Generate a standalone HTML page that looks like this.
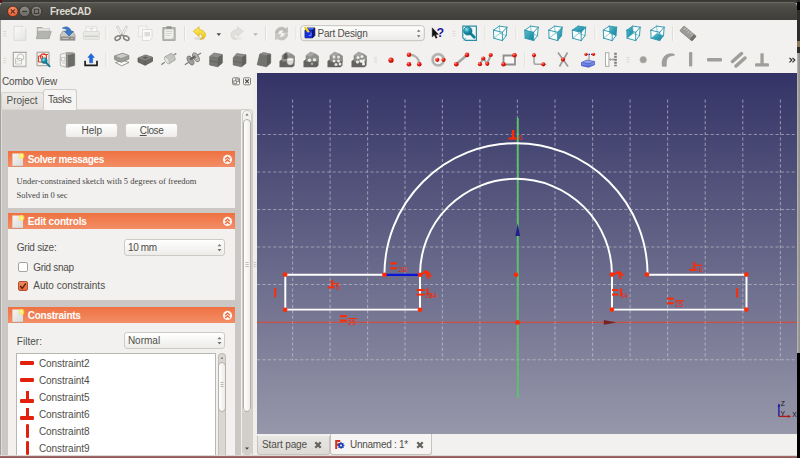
<!DOCTYPE html>
<html><head><meta charset="utf-8"><title>FreeCAD</title>
<style>
html,body{margin:0;padding:0;}
body{width:800px;height:458px;overflow:hidden;position:relative;background:#f2f1f0;font-family:"Liberation Sans",sans-serif;}
div,span,svg{position:absolute;box-sizing:border-box;}
.t{white-space:nowrap;display:block;}
.btn{border:1px solid #cecbc5;border-radius:3px;background:linear-gradient(#ffffff,#edecea);}
.hdr{left:8px;width:227px;height:16.3px;background:linear-gradient(#ef7241,#f28d66);}
.body{left:8px;width:227px;background:#f2f1f0;}
.sep{width:1px;background:#d6d3cf;}
.cb{width:10px;height:10px;border:1px solid #a9a49d;border-radius:2px;background:#fff;}
</style></head><body>

<div style="left:0;top:0;width:800px;height:3px;background:#3a3935"></div>
<div style="left:0;top:0;width:2px;height:3px;background:#5a1212"></div>
<div style="left:0;top:2px;width:797px;height:18px;background:linear-gradient(#56554f,#4a4944 35%,#3f3e3a);border-radius:4px 4px 0 0;border-top:1px solid #6b6a64"></div>
<svg style="left:0;top:0" width="60" height="22" viewBox="0 0 60 22">
<defs><radialGradient id="gc" cx="50%" cy="35%" r="65%"><stop offset="0" stop-color="#f79a75"/><stop offset="1" stop-color="#e3542a"/></radialGradient>
<linearGradient id="gg" x1="0" y1="0" x2="0" y2="1"><stop offset="0" stop-color="#8d8b84"/><stop offset="1" stop-color="#6b6962"/></linearGradient></defs>
<circle cx="12.8" cy="11.4" r="5.3" fill="url(#gc)" stroke="#3a2a22" stroke-width=".8"/>
<path d="M10.8 9.4l4 4M14.8 9.4l-4 4" stroke="#5c2a18" stroke-width="1.2" fill="none"/>
<circle cx="24.6" cy="11.4" r="5.3" fill="url(#gg)" stroke="#2d2c29" stroke-width=".8"/>
<path d="M22.2 11.5h4.8" stroke="#3c3b37" stroke-width="1.2"/>
<circle cx="36.5" cy="11.4" r="5.3" fill="url(#gg)" stroke="#2d2c29" stroke-width=".8"/>
<rect x="34.4" y="9.3" width="4.2" height="4.2" fill="none" stroke="#3c3b37" stroke-width="1"/>
</svg>
<span class="t" id="title" style="left:50px;top:2.10px;height:20px;line-height:20px;font-size:10px;color:#dfdbd2;font-family:'Liberation Sans', sans-serif;letter-spacing:-0.257px;font-weight:bold;">FreeCAD</span>
<div style="left:797px;top:0;width:3px;height:53px;background:#2f2d2a"></div>
<div style="left:797px;top:2px;width:3px;height:8px;background:#000"></div>
<div style="left:797px;top:41px;width:3px;height:6px;background:#8a7a5c"></div>
<div style="left:797px;top:53px;width:3px;height:300px;background:linear-gradient(90deg,#c2c0bc,#a09e9a 40%,#8f8d89)"></div>
<div style="left:797px;top:353px;width:3px;height:105px;background:#000"></div>
<div style="left:0;top:20px;width:1px;height:435px;background:#a3a19d"></div>
<div style="left:1px;top:20px;width:796px;height:53px;background:#f2f1f0"></div>
<svg style="left:0;top:20px" width="797" height="53" viewBox="0 20 797 53">
<defs>
<linearGradient id="gPage" x1="0" y1="0" x2="1" y2="1"><stop offset="0" stop-color="#fbfbfa"/><stop offset="1" stop-color="#e4e4e2"/></linearGradient>
<linearGradient id="gYel" x1="0" y1="0" x2="0" y2="1"><stop offset="0" stop-color="#fdf06a"/><stop offset="1" stop-color="#e8c414"/></linearGradient>
<linearGradient id="gTeal" x1="0" y1="0" x2="1" y2="1"><stop offset="0" stop-color="#5ec0d2"/><stop offset="1" stop-color="#0b7f98"/></linearGradient>
<radialGradient id="gRed" cx="35%" cy="30%" r="70%"><stop offset="0" stop-color="#ff9a8a"/><stop offset=".45" stop-color="#f02010"/><stop offset="1" stop-color="#b00c04"/></radialGradient>
<radialGradient id="gBall" cx="35%" cy="30%" r="70%"><stop offset="0" stop-color="#9be0ee"/><stop offset=".5" stop-color="#1c9cb6"/><stop offset="1" stop-color="#0a6a80"/></radialGradient>
<linearGradient id="gBtn" x1="0" y1="0" x2="0" y2="1"><stop offset="0" stop-color="#fefefe"/><stop offset="1" stop-color="#eceae8"/></linearGradient>
<linearGradient id="gBlue" x1="0" y1="0" x2="0" y2="1"><stop offset="0" stop-color="#a9b8f2"/><stop offset="1" stop-color="#4a62d8"/></linearGradient>
</defs>
<path d="M3.2 31.500000000000004h3M3.2 33.7h3M3.2 35.900000000000006h3" stroke="#dcd9d5" stroke-width="1"/>
<path d="M3.2 58.3h3M3.2 60.5h3M3.2 62.7h3" stroke="#dcd9d5" stroke-width="1"/>
<path d="M14 26.3h9l2.800 2.800v11.200h-11.800z" fill="url(#gPage)" stroke="#dbdbd8" stroke-width="1"/><path d="M22.600 27h2.400v2.600h-2.400z" fill="#fff" stroke="#e2e2df" stroke-width=".5"/>
<path d="M36.800 27h5.200l1 1.300h7v10h-13.200z" fill="#a9a9a5"/><path d="M38 28.300h11.400v8h-11.400z" fill="#ebebe8" stroke="#c8c8c4" stroke-width=".5"/><path d="M38.600 29.600h10.800v7h-10.800z" fill="#dcdcd9"/><path d="M36.300 38.700l2-7.300h13l-2.300 7.300z" fill="#b3b3af" stroke="#a0a09c" stroke-width=".7"/>
<path d="M60.300 35l2.500-4h9.700l2.500 4v5.300h-14.700z" fill="#c9c9c5" stroke="#9a9a96" stroke-width=".8"/><path d="M60.700 36.600h13.900v3.500h-13.900z" fill="#8d8d89"/><path d="M62.500 38.400h6" stroke="#d4d4d0" stroke-width=".8"/><circle cx="72" cy="38.400" r=".7" fill="#d4d4d0"/>
<path d="M62.300 28.200c3.800-2.800 8.300-.8 8.800 3.300h2.300l-4.400 4.500-4.400-4.500h2.500c-.2-2.200-2.300-3.300-4.800-3.300z" fill="#3a78c8" stroke="#2a5da6" stroke-width=".6"/>
<path d="M86 26.800h10.800v5.500h-10.800z" fill="#f7f7f6" stroke="#d8d8d5" stroke-width=".8"/><path d="M84.300 31.500h14q1 0 1 1v5.800q0 1-1 1h-14q-1 0-1-1v-5.800q0-1 1-1z" fill="#e9e9e6" stroke="#d4d4d0" stroke-width=".8"/><path d="M84.500 36.300h13.600" stroke="#cbcbc7" stroke-width="1.400"/><path d="M89.500 28.600h4M91.500 28.600v2" stroke="#d2d2ce" stroke-width=".8"/>
<path d="M106 26.0v15" stroke="#e0ddd9" stroke-width="1"/><path d="M107 26.0v15" stroke="#f9f9f8" stroke-width="1"/>
<path d="M116.500 26.700l1.700-.7 4.700 9.200-1.500 1.100z" fill="#f6f6f5" stroke="#bfbfbb" stroke-width=".7"/><path d="M127.500 26.700l-1.700-.7-4.700 9.200 1.500 1.100z" fill="#f6f6f5" stroke="#bfbfbb" stroke-width=".7"/><ellipse cx="117.700" cy="38.100" rx="2.900" ry="1.900" transform="rotate(-32 117.700 38.100)" fill="none" stroke="#80807c" stroke-width="1.500"/><ellipse cx="126.300" cy="38.100" rx="2.900" ry="1.900" transform="rotate(32 126.300 38.100)" fill="none" stroke="#80807c" stroke-width="1.500"/><path d="M120 36.300l2-1.500 2 1.500" fill="none" stroke="#80807c" stroke-width="1.300"/>
<path d="M138.500 26h8.500v10.500h-8.500z" fill="#f5f5f4" stroke="#dededb" stroke-width=".8"/><path d="M142.500 29.500h9.500v8.500l-2.500 2.500h-7z" fill="#fafaf9" stroke="#d6d6d3" stroke-width=".8"/><path d="M144.500 32h5.500v4.500h-5.500z" fill="#dcdcd9"/>
<path d="M162.800 27.500h12.400v13h-12.400z" fill="#b4b4b0" stroke="#a2a29e" stroke-width=".8"/><path d="M164.400 29.400h9.200v9.400h-9.200z" fill="#f0f0ee"/><path d="M166.500 26.300h5v2.300h-5z" fill="#8e8e8a"/><path d="M165.800 31.500h6.400M165.800 33.500h6.400M165.800 35.500h4.500" stroke="#d0d0cc" stroke-width=".9"/><path d="M171.300 38.800l2.300-2.300v2.300z" fill="#c8c8c4"/>
<path d="M184.5 26.0v15" stroke="#e0ddd9" stroke-width="1"/><path d="M185.5 26.0v15" stroke="#f9f9f8" stroke-width="1"/>
<ellipse cx="199.500" cy="38.600" rx="5.500" ry="1.300" fill="#d8d6d2" opacity=".8"/>
<path d="M193.300 31.300l5.800-4.600v2.900c4.300.3 6.600 3 6.300 5.800-.3 2.300-2.200 3.800-5.200 3.900 1.700-1 2.300-2.300 2-3.500-.3-1.300-1.500-2-3.100-2v2.800z" fill="url(#gYel)" stroke="#d9b010" stroke-width=".7" stroke-linejoin="round"/>
<path d="M216.600 33.200h4.400l-2.200 2.900z" fill="#4a4844"/>
<ellipse cx="237" cy="38.600" rx="5.500" ry="1.300" fill="#e4e2de" opacity=".8"/>
<path d="M243.200 31.300l-5.800-4.600v2.900c-4.300.3-6.600 3-6.300 5.800.3 2.300 2.200 3.800 5.200 3.900-1.700-1-2.300-2.300-2-3.500.3-1.300 1.500-2 3.100-2v2.800z" fill="#e0e0dd" stroke="#d0d0cc" stroke-width=".7" stroke-linejoin="round"/>
<path d="M253.300 33.200h4.400l-2.200 2.900z" fill="#b9b7b2"/>
<path d="M265.5 26.0v15" stroke="#e0ddd9" stroke-width="1"/><path d="M266.5 26.0v15" stroke="#f9f9f8" stroke-width="1"/>
<path d="M275.300 33.500c0-4 3-6.300 6.300-6.300 1.800 0 3.200.6 4.300 1.700l1.600-1.500v5.200h-5.300l1.800-1.800c-.7-.6-1.500-.9-2.400-.9-1.900 0-3.500 1.400-3.600 3.600z" fill="#bbbbb7" stroke="#adada9" stroke-width=".5"/>
<path d="M287.700 33.700c0 4-3 6.300-6.300 6.300-1.800 0-3.200-.6-4.300-1.700l-1.600 1.500v-5.200h5.300l-1.800 1.800c.7.600 1.500.9 2.400.9 1.900 0 3.500-1.400 3.600-3.600z" fill="#c6c6c2" stroke="#b3b3af" stroke-width=".5"/>
<path d="M296 26.0v15" stroke="#e0ddd9" stroke-width="1"/><path d="M297 26.0v15" stroke="#f9f9f8" stroke-width="1"/>
<rect x="300.800" y="25.700" width="123.500" height="15" rx="3" fill="url(#gBtn)" stroke="#c6c2bc" stroke-width="1"/>
<path d="M305 30l2.200-2h7.600v7.600l-2.200 2.200h-7.600z" fill="#0a1490" stroke="#05083a" stroke-width=".8"/><path d="M305 30h7.600v7.800h-7.600z" fill="#1230e0"/><path d="M305 30l2.200-2h7.600l-2.200 2z" fill="#4468ff"/><path d="M305 30h7.600v7.800M312.600 30l2.200-2" fill="none" stroke="#05083a" stroke-width=".6"/><path d="M305.300 27.800l3 3.600" stroke="#f4d21c" stroke-width="2.300" stroke-linecap="round"/><path d="M308.800 35.500h2.300v-3" stroke="#8ea0ff" stroke-width=".8" fill="none"/>
<path d="M416.900 31.700l1.800-2.200 1.800 2.200zM416.900 35.300l1.800 2.200 1.800-2.200z" fill="#76746f"/>
<path d="M432.200 27.800v9.200l2.100-2 1.500 3.300 1.400-.6-1.500-3.200h2.800z" fill="#111" stroke="#111" stroke-width=".4"/>
<text x="436.600" y="37.400" font-family="Liberation Sans, sans-serif" font-weight="bold" font-size="12.500" fill="#1a1a9c">?</text>
<path d="M452.5 31.3h3M452.5 33.5h3M452.5 35.7h3" stroke="#dcd9d5" stroke-width="1"/>
<path d="M462.800 26.200h13.600v14.200h-11l-2.600-2.600z" fill="#f2f8fa" stroke="#2a8ea4" stroke-width="1.200"/><path d="M463.800 40.400l2-2.600" stroke="#2a8ea4" stroke-width=".8"/>
<path d="M470.800 33.800l3.500 3.500" stroke="#0d7f96" stroke-width="2.700" stroke-linecap="round"/><circle cx="467.800" cy="30.900" r="4.200" fill="url(#gBall)" stroke="#0a6a80" stroke-width=".6"/>
<path d="M485 26.0v15" stroke="#e0ddd9" stroke-width="1"/><path d="M486 26.0v15" stroke="#f9f9f8" stroke-width="1"/>
<path d="M493.5 30.2L499.3 26.1L506.9 27.2L506.2 35.7L502.4 40.6L493.8 38.2z" fill="#fbfdfd"/><path d="M506.2 35.7L500.0 33.3" stroke="#5cb2c2" stroke-width=".7"/><path d="M500.0 33.3L499.3 26.1" stroke="#5cb2c2" stroke-width=".7"/><path d="M493.8 38.2L500.0 33.3" stroke="#5cb2c2" stroke-width=".7"/><path d="M493.5 30.2L502.4 32.3M502.4 32.3L502.4 40.6M502.4 40.6L493.8 38.2M493.8 38.2L493.5 30.2M499.3 26.1L506.9 27.2M506.9 27.2L506.2 35.7M493.5 30.2L499.3 26.1M502.4 32.3L506.9 27.2M502.4 40.6L506.2 35.7" stroke="#2f98ac" stroke-width=".95" stroke-linecap="round" fill="none"/>
<path d="M516 26.0v15" stroke="#e0ddd9" stroke-width="1"/><path d="M517 26.0v15" stroke="#f9f9f8" stroke-width="1"/>
<path d="M524.8 30.2L530.6 26.1L538.2 27.2L537.5 35.7L533.7 40.6L525.1 38.2z" fill="#fbfdfd"/><path d="M537.5 35.7L531.3 33.3" stroke="#5cb2c2" stroke-width=".7"/><path d="M531.3 33.3L530.6 26.1" stroke="#5cb2c2" stroke-width=".7"/><path d="M525.1 38.2L531.3 33.3" stroke="#5cb2c2" stroke-width=".7"/><path d="M524.8 30.2L533.7 32.3L533.7 40.6L525.1 38.2z" fill="url(#gTeal)"/><path d="M524.8 30.2L533.7 32.3M533.7 32.3L533.7 40.6M533.7 40.6L525.1 38.2M525.1 38.2L524.8 30.2M530.6 26.1L538.2 27.2M538.2 27.2L537.5 35.7M524.8 30.2L530.6 26.1M533.7 32.3L538.2 27.2M533.7 40.6L537.5 35.7" stroke="#2f98ac" stroke-width=".95" stroke-linecap="round" fill="none"/>
<path d="M548.8 30.2L554.6 26.1L562.2 27.2L561.5 35.7L557.7 40.6L549.1 38.2z" fill="#fbfdfd"/><path d="M561.5 35.7L555.3 33.3" stroke="#5cb2c2" stroke-width=".7"/><path d="M555.3 33.3L554.6 26.1" stroke="#5cb2c2" stroke-width=".7"/><path d="M549.1 38.2L555.3 33.3" stroke="#5cb2c2" stroke-width=".7"/><path d="M557.7 32.3L562.2 27.2L561.5 35.7L557.7 40.6z" fill="url(#gTeal)"/><path d="M548.8 30.2L557.7 32.3M557.7 32.3L557.7 40.6M557.7 40.6L549.1 38.2M549.1 38.2L548.8 30.2M554.6 26.1L562.2 27.2M562.2 27.2L561.5 35.7M548.8 30.2L554.6 26.1M557.7 32.3L562.2 27.2M557.7 40.6L561.5 35.7" stroke="#2f98ac" stroke-width=".95" stroke-linecap="round" fill="none"/>
<path d="M572.3 30.2L578.1 26.1L585.7 27.2L585.0 35.7L581.2 40.6L572.6 38.2z" fill="#fbfdfd"/><path d="M585.0 35.7L578.8 33.3" stroke="#5cb2c2" stroke-width=".7"/><path d="M578.8 33.3L578.1 26.1" stroke="#5cb2c2" stroke-width=".7"/><path d="M572.6 38.2L578.8 33.3" stroke="#5cb2c2" stroke-width=".7"/><path d="M572.3 30.2L578.1 26.1L585.7 27.2L581.2 32.3z" fill="url(#gTeal)"/><path d="M572.3 30.2L581.2 32.3M581.2 32.3L581.2 40.6M581.2 40.6L572.6 38.2M572.6 38.2L572.3 30.2M578.1 26.1L585.7 27.2M585.7 27.2L585.0 35.7M572.3 30.2L578.1 26.1M581.2 32.3L585.7 27.2M581.2 40.6L585.0 35.7" stroke="#2f98ac" stroke-width=".95" stroke-linecap="round" fill="none"/>
<path d="M595 26.0v15" stroke="#e0ddd9" stroke-width="1"/><path d="M596 26.0v15" stroke="#f9f9f8" stroke-width="1"/>
<path d="M603.3 30.2L609.1 26.1L616.7 27.2L616.0 35.7L612.2 40.6L603.6 38.2z" fill="#fbfdfd"/><path d="M609.1 26.1L616.7 27.2L616.0 35.7L609.8 33.3z" fill="url(#gTeal)"/><path d="M616.0 35.7L609.8 33.3" stroke="#5cb2c2" stroke-width=".7"/><path d="M609.8 33.3L609.1 26.1" stroke="#5cb2c2" stroke-width=".7"/><path d="M603.6 38.2L609.8 33.3" stroke="#5cb2c2" stroke-width=".7"/><path d="M603.3 30.2L612.2 32.3M612.2 32.3L612.2 40.6M612.2 40.6L603.6 38.2M603.6 38.2L603.3 30.2M609.1 26.1L616.7 27.2M616.7 27.2L616.0 35.7M603.3 30.2L609.1 26.1M612.2 32.3L616.7 27.2M612.2 40.6L616.0 35.7" stroke="#2f98ac" stroke-width=".95" stroke-linecap="round" fill="none"/>
<path d="M626.8 30.2L632.6 26.1L640.2 27.2L639.5 35.7L635.7 40.6L627.1 38.2z" fill="#fbfdfd"/><path d="M626.8 30.2L632.6 26.1L633.3 33.3L627.1 38.2z" fill="url(#gTeal)"/><path d="M639.5 35.7L633.3 33.3" stroke="#5cb2c2" stroke-width=".7"/><path d="M633.3 33.3L632.6 26.1" stroke="#5cb2c2" stroke-width=".7"/><path d="M627.1 38.2L633.3 33.3" stroke="#5cb2c2" stroke-width=".7"/><path d="M626.8 30.2L635.7 32.3M635.7 32.3L635.7 40.6M635.7 40.6L627.1 38.2M627.1 38.2L626.8 30.2M632.6 26.1L640.2 27.2M640.2 27.2L639.5 35.7M626.8 30.2L632.6 26.1M635.7 32.3L640.2 27.2M635.7 40.6L639.5 35.7" stroke="#2f98ac" stroke-width=".95" stroke-linecap="round" fill="none"/>
<path d="M650.8 30.2L656.6 26.1L664.2 27.2L663.5 35.7L659.7 40.6L651.1 38.2z" fill="#fbfdfd"/><path d="M651.1 38.2L659.7 40.6L663.5 35.7L657.3 33.3z" fill="url(#gTeal)"/><path d="M663.5 35.7L657.3 33.3" stroke="#5cb2c2" stroke-width=".7"/><path d="M657.3 33.3L656.6 26.1" stroke="#5cb2c2" stroke-width=".7"/><path d="M651.1 38.2L657.3 33.3" stroke="#5cb2c2" stroke-width=".7"/><path d="M650.8 30.2L659.7 32.3M659.7 32.3L659.7 40.6M659.7 40.6L651.1 38.2M651.1 38.2L650.8 30.2M656.6 26.1L664.2 27.2M664.2 27.2L663.5 35.7M650.8 30.2L656.6 26.1M659.7 32.3L664.2 27.2M659.7 40.6L663.5 35.7" stroke="#2f98ac" stroke-width=".95" stroke-linecap="round" fill="none"/>
<path d="M672.5 26.0v15" stroke="#e0ddd9" stroke-width="1"/><path d="M673.5 26.0v15" stroke="#f9f9f8" stroke-width="1"/>
<g transform="rotate(40 688 33.500)"><rect x="680" y="30.300" width="16" height="6.400" rx="1" fill="#9a9a96" stroke="#7e7e7a" stroke-width=".7"/><path d="M682.500 30.500v3M685 30.500v2M687.500 30.500v3M690 30.500v2M692.500 30.500v3" stroke="#d4d4d0" stroke-width=".8"/><rect x="693" y="30.300" width="3" height="6.400" fill="#6e6e6a"/></g>
<path d="M13.300 52.300h12.800v14h-12.800z" fill="#f7f7f6" stroke="#a9a9a5" stroke-width="1.200"/><path d="M14 67h12.500v-13.500" fill="none" stroke="#d2d2ce" stroke-width=".9"/><circle cx="20.500" cy="57.300" r="3.300" fill="none" stroke="#b0b0ac" stroke-width=".8"/><path d="M15.500 58.500h6v5.500h-6z" fill="none" stroke="#bcbcb8" stroke-width=".8"/><path d="M15 61.500h3" stroke="#c4c4c0" stroke-width=".7"/>
<path d="M37 52.200h12v13.500h-12z" fill="#f4efed" stroke="#9a9a96" stroke-width="1"/><circle cx="43.500" cy="56.800" r="3" fill="none" stroke="#e03a20" stroke-width="1.100"/><path d="M38.500 56h4v6h-4zM43 54.500h5" fill="none" stroke="#e03a20" stroke-width="1"/><path d="M46 62.500l3.600 3.800" stroke="#0d7f96" stroke-width="1.900" stroke-linecap="round"/><circle cx="44.300" cy="60.600" r="2.900" fill="url(#gBall)" stroke="#0a6a80" stroke-width=".5"/>
<path d="M60.300 54.500l6.500-2h6.500l1.500 1v12l-7.500 2-7-2z" fill="#f2f2f0" stroke="#a9a9a5" stroke-width=".8"/><path d="M66.800 52.500h6.500l1.500 1-7.500 1.500z" fill="#9a9a96"/><path d="M67.300 55v12.500l7.500-2v-12z" fill="#6b6b67"/><path d="M66.800 52.500l.5 2.500v12.500l-1.500-.5v-13z" fill="#8a8a86"/><path d="M61.500 57.500h3.500v3.500h-3.500zM62 63h3" stroke="#b9b9b5" stroke-width=".7" fill="none"/>
<path d="M85.100 60.800v4.600h11.900v-4.600" fill="none" stroke="#1c1c1a" stroke-width="1.700"/><path d="M91.100 53.600l3.200 3.800h-1.700v5.400h-3v-5.400h-1.700z" fill="#1f6ae0" stroke="#1450b8" stroke-width=".5"/>
<path d="M106 52.2v15" stroke="#e0ddd9" stroke-width="1"/><path d="M107 52.2v15" stroke="#f9f9f8" stroke-width="1"/>
<path d="M115.500 62.600l7.300-2.400 6.200 2.300-7.300 3.300z" fill="#fafaf9" stroke="#6e6e6a" stroke-width=".7"/><path d="M114.600 56l8-2.700 6.200 2.200v3.500l-7.600 3.300-6.600-2.800z" fill="#9c9c98" stroke="#767672" stroke-width=".7"/><path d="M114.600 56l8-2.700 6.200 2.200-7.600 3z" fill="#cbcbc8" stroke="#8a8a86" stroke-width=".6"/>
<path d="M138 58l7.500-3 7 2.300v4l-7.300 4-7.200-3.300z" fill="#696966" stroke="#4e4e4b" stroke-width=".7"/><path d="M138 58l7.500-3 7 2.300-7.300 3.300z" fill="#878783"/><path d="M142.300 57.800l3-1.200 2.800 1-3 1.300z" fill="#5c5c59"/><path d="M145.200 60.600v4.500" stroke="#55554f" stroke-width=".6"/>
<path d="M161.300 64.600l3.500-2.300M173.500 55.300l2.800-1.900" stroke="#8a8a86" stroke-width="1.300"/><path d="M164.500 57l6.500-3.700c2.500.8 4.300 3.600 4.300 6.600l-6.300 4c-2.800-.6-4.600-3.500-4.500-6.900z" fill="#c3c3bf" stroke="#9c9c98" stroke-width=".7"/><path d="M164.500 57c-.1 3.400 1.700 6.300 4.500 6.900 .5-2.800-.5-6-4.500-6.900z" fill="#e6e6e3" stroke="#a9a9a5" stroke-width=".5"/>
<path d="M184.800 64.800l4-2.600M197 55.500l4-2.500" stroke="#7c7c78" stroke-width="1.200"/><ellipse cx="190.500" cy="60.500" rx="2.600" ry="5" transform="rotate(-30 190.500 60.500)" fill="#9d9d99" stroke="#6e6e6a" stroke-width=".7"/><ellipse cx="196" cy="57.300" rx="2.600" ry="5" transform="rotate(-30 196 57.300)" fill="#b5b5b1" stroke="#6e6e6a" stroke-width=".7"/><path d="M190 59.500l5.500-3.200" stroke="#6a6a66" stroke-width="2.600"/>
<path d="M209.7 56.300l4.300-3.300 8.300 1.500v8.500l-4.500 3.800-8.100-1.800z" fill="#8c8c88" stroke="#666662" stroke-width=".6"/><path d="M209.7 56.800q3.500-1 8.100.8v9.200l-8.100-1.800z" fill="#757571"/><path d="M217.8 57.600l4.500-3.100v8.500l-4.500 3.800z" fill="#62625f"/><path d="M209.7 60.800l8.100 1.500" stroke="#5a5a57" stroke-width=".7"/>
<path d="M233.2 57.800l3.500-4.300 9.300 1.300v8.500l-4.500 3.500-8.300-1.800z" fill="#8e8e8a" stroke="#666662" stroke-width=".6"/><path d="M233.2 57.800l2.500-2 6 1.300v9.700l-8.500-1.800z" fill="#757571"/><path d="M241.7 57.100l4.300-2.300v8.500l-4.300 3.500z" fill="#62625f"/><path d="M233.2 61.300l8.500 1.500" stroke="#5a5a57" stroke-width=".7"/>
<path d="M259.8 54l3.700-1.500 7.200 1.500v9l-4.200 3.800-9.300-2z" fill="#8e8e8a" stroke="#666662" stroke-width=".6"/><path d="M259.8 54l6.700 1.300v11.500l-9.300-2z" fill="#72726e"/><path d="M266.5 55.300l4.200-1.300v9l-4.200 3.800z" fill="#5f5f5c"/>
<path d="M279.5 61l3-2 12 .500v6l-2 1.800h-13z" fill="#62625f"/><path d="M282 55.500l4.500-3.300 4.500 1.500 3.500 2.300v5.500h-12.500z" fill="#8f8f8b" stroke="#777773" stroke-width=".5"/><path d="M282 55.500l4.500-3.300 4.500 1.500-4.500 3z" fill="#a6a6a2"/><path d="M283.5 54.500l2.300-1.500 1.700 1v5h-4z" fill="#5a5a57"/><ellipse cx="290.2" cy="61.5" rx="3.200" ry="3.600" fill="#dededb" stroke="#a4a4a0" stroke-width=".5"/><ellipse cx="290.2" cy="59.6" rx="3.200" ry="1.500" fill="#f7f7f5" stroke="#b9b9b5" stroke-width=".4"/>
<path d="M303.5 61l3-2 12 .500v6l-2 1.800h-13z" fill="#62625f"/><path d="M306 55.500l4.500-3.300 4.500 1.500 3.500 2.300v5.500h-12.500z" fill="#8f8f8b" stroke="#777773" stroke-width=".5"/><path d="M306 55.500l4.500-3.300 4.500 1.500-4.500 3z" fill="#a6a6a2"/><circle cx="309.5" cy="60.300" r="1.700" fill="#e8e8e5"/><circle cx="314.5" cy="59.800" r="1.700" fill="#e8e8e5"/><circle cx="312" cy="63.800" r="1.300" fill="#a9a9a5"/>
<path d="M327.5 61l3-2 12 .500v6l-2 1.800h-13z" fill="#62625f"/><path d="M330 55.500l4.500-3.300 4.500 1.500 3.500 2.300v5.500h-12.500z" fill="#8f8f8b" stroke="#777773" stroke-width=".5"/><path d="M330 55.500l4.500-3.300 4.500 1.500-4.500 3z" fill="#a6a6a2"/><circle cx="334" cy="57" r="1.500" fill="#e6e6e3"/><circle cx="338.5" cy="57" r="1.500" fill="#e6e6e3"/><circle cx="334" cy="61" r="1.500" fill="#e6e6e3"/><circle cx="338.5" cy="61" r="1.500" fill="#e6e6e3"/><circle cx="336" cy="64.5" r="1.500" fill="#e6e6e3"/><circle cx="340" cy="64" r="1.500" fill="#e6e6e3"/>
<path d="M351.5 61l3-2 12 .500v6l-2 1.800h-13z" fill="#62625f"/><path d="M354 55.500l4.500-3.300 4.500 1.500 3.500 2.300v5.500h-12.500z" fill="#8f8f8b" stroke="#777773" stroke-width=".5"/><path d="M354 55.500l4.500-3.300 4.500 1.500-4.500 3z" fill="#a6a6a2"/><circle cx="358" cy="57.5" r="1.600" fill="#ececea"/><circle cx="362" cy="56.5" r="1.600" fill="#ececea"/><circle cx="357.5" cy="62" r="1.600" fill="#ececea"/><circle cx="361" cy="61" r="1.600" fill="#ececea"/><circle cx="363.5" cy="64" r="1.600" fill="#ececea"/><path d="M360 62l4.500-3.500v5z" fill="#f4f4f2"/>
<path d="M374 57.5h3M374 59.7h3M374 61.900000000000006h3" stroke="#dcd9d5" stroke-width="1"/>
<circle cx="391" cy="60.2" r="2.6" fill="url(#gRed)"/>
<path d="M409.500 54.800c5.500 0 9.500 3.500 9.800 9.200" fill="none" stroke="#b0b0ac" stroke-width="2.400"/><circle cx="409" cy="54.8" r="2.3" fill="url(#gRed)"/><circle cx="409" cy="64.3" r="2.3" fill="url(#gRed)"/><circle cx="419.3" cy="64.3" r="2.3" fill="url(#gRed)"/>
<circle cx="438.200" cy="59.800" r="5.700" fill="none" stroke="#b0b0ac" stroke-width="2.700"/><circle cx="438.200" cy="59.800" r="6.900" fill="none" stroke="#d4d4d0" stroke-width=".6"/><circle cx="437.3" cy="59.8" r="2.1" fill="url(#gRed)"/><circle cx="443.5" cy="59.8" r="2.1" fill="url(#gRed)"/>
<path d="M456.500 64l10.500-9" stroke="#a4a4a0" stroke-width="2.600"/><circle cx="456.3" cy="64.3" r="2.3" fill="url(#gRed)"/><circle cx="467" cy="54.9" r="2.3" fill="url(#gRed)"/>
<path d="M480 64l3.300-5.500 4 5 3.500-8.500" fill="none" stroke="#a4a4a0" stroke-width="2"/><circle cx="480" cy="64.2" r="2.1" fill="url(#gRed)"/><circle cx="483.3" cy="58.5" r="2.1" fill="url(#gRed)"/><circle cx="487.3" cy="63.8" r="2.1" fill="url(#gRed)"/><circle cx="490.7" cy="55" r="2.1" fill="url(#gRed)"/>
<path d="M503.500 55.500h11.500v9h-11.500z" fill="#f7f7f6" stroke="#8e8e8a" stroke-width="1.800"/><circle cx="514.5" cy="55.3" r="2.3" fill="url(#gRed)"/><circle cx="503.5" cy="64.3" r="2.3" fill="url(#gRed)"/>
<path d="M524.8 52.2v15" stroke="#e0ddd9" stroke-width="1"/><path d="M525.8 52.2v15" stroke="#f9f9f8" stroke-width="1"/>
<path d="M534 54v7q0 3.300 3.300 3.300h7" fill="none" stroke="#b9b9b5" stroke-width="1.500"/><path d="M534 55v9.300h9.500" fill="none" stroke="#a0a09c" stroke-width=".9"/><path d="M534 52.500l1.200 2.500h-2.400zM546.500 64.300l-2.500 1.200v-2.400z" fill="#a0a09c"/><circle cx="534" cy="55.3" r="2" fill="url(#gRed)"/><circle cx="543.3" cy="64.3" r="2.1" fill="url(#gRed)"/>
<path d="M558 52.500l10 14M567.500 52.500l-8 14" stroke="#9c9c98" stroke-width="1.700"/><circle cx="563" cy="59.5" r="2.1" fill="url(#gRed)"/>
<path d="M581.500 62.500l5.500-2.500 7.500 1.500v3.300l-6 2.400-7-1.500z" fill="url(#gBlue)" stroke="#3b50c0" stroke-width=".7"/><path d="M581.500 62.500l7 1.400 6-2.400" fill="none" stroke="#3b50c0" stroke-width=".6"/><path d="M586 54.300h7" stroke="#2a2ab8" stroke-width="1.300" stroke-dasharray="1.500 1"/><path d="M589 55v6" stroke="#7a7a76" stroke-width=".9"/><circle cx="586" cy="54.3" r="1.6" fill="url(#gRed)"/><circle cx="593.5" cy="54.3" r="1.6" fill="url(#gRed)"/>
<rect x="605.500" y="52.800" width="3.400" height="13.500" fill="#fdfdfc" stroke="#9a9a96" stroke-width=".8"/><path d="M615.500 52.800v13.500" stroke="#7c7c78" stroke-width="2.600" stroke-dasharray="2 1"/><path d="M609.500 59.500h4.500M611 58l-1.500 1.500 1.500 1.500M612.500 58l1.500 1.500-1.500 1.500" fill="none" stroke="#8a8a86" stroke-width=".7"/>
<path d="M626.5 57.5h3M626.5 59.7h3M626.5 61.900000000000006h3" stroke="#dcd9d5" stroke-width="1"/>
<circle cx="643.200" cy="59.700" r="3.300" fill="#9e9e9a" stroke="#b9b9b5" stroke-width=".8"/>
<path d="M662.300 66.300c-1-6 1-11.500 7.500-12.500 2.500-.3 4.500.3 4.800 1.200-.5.800-2 .5-4 1-3.800 1-4.500 5-4.300 10.300z" fill="#9e9e9a" stroke="#8a8a86" stroke-width=".5"/>
<rect x="689" y="52" width="3.300" height="14.500" rx="1.200" fill="#9e9e9a"/>
<rect x="707" y="58.100" width="15" height="3.300" rx="1.200" fill="#9e9e9a"/>
<path d="M732.500 61.500l9-8M736 66l9-8" stroke="#9e9e9a" stroke-width="3.500" stroke-linecap="round"/>
<rect x="760.400" y="53.300" width="3.300" height="11" fill="#9e9e9a"/><rect x="755" y="63.300" width="14" height="3.300" rx="1.200" fill="#9e9e9a"/>
<path d="M789.500 57.800l2.300 2.300-2.300 2.300M792.500 57.800l2.300 2.300-2.300 2.300" fill="none" stroke="#2a2926" stroke-width="1.200"/>
</svg>
<span class="t" id="pd" style="left:317.5px;top:23.90px;height:20px;line-height:20px;font-size:10px;color:#504e49;font-family:'Liberation Sans', sans-serif;letter-spacing:-0.205px;">Part Design</span>
<span class="t" id="combo" style="left:2px;top:72.10px;height:20px;line-height:20px;font-size:10px;color:#504e49;font-family:'Liberation Sans', sans-serif;letter-spacing:-0.152px;">Combo View</span>
<svg style="left:230px;top:76px" width="24" height="12" viewBox="0 0 24 12">
<rect x="2.5" y="1.8" width="7" height="7" rx="1.2" fill="#f7f6f5" stroke="#77746e" stroke-width=".9"/>
<rect x="5.6" y="3" width="2.7" height="2.7" fill="none" stroke="#77746e" stroke-width=".8"/><rect x="3.8" y="4.8" width="2.7" height="2.7" fill="#f7f6f5" stroke="#77746e" stroke-width=".8"/>
<rect x="13.5" y="1.8" width="7" height="7" rx="1.2" fill="#f7f6f5" stroke="#77746e" stroke-width=".9"/>
<path d="M15.2 3.5l3.6 3.6M18.8 3.5l-3.6 3.6" stroke="#4a4843" stroke-width="1.1"/>
</svg>
<div style="left:1px;top:109px;width:240px;height:346px;background:#cbc7c4;border-top:1px solid #dad7d3;border-left:1px solid #e0deda"></div>
<div style="left:1px;top:91.500px;width:42.500px;height:17.500px;background:linear-gradient(#edebe9,#e2e0dc);border:1px solid #d5d2cd;border-bottom:none;border-radius:3px 3px 0 0"></div>
<div style="left:43px;top:89.400px;width:33.800px;height:20.600px;background:#f6f5f4;border:1px solid #d0cdc8;border-bottom:none;border-radius:3px 3px 0 0"></div>
<span class="t" id="tproj" style="left:6.5px;top:91.10px;height:20px;line-height:20px;font-size:10px;color:#504e49;font-family:'Liberation Sans', sans-serif;letter-spacing:-0.018px;">Project</span>
<span class="t" id="ttask" style="left:48px;top:90.10px;height:20px;line-height:20px;font-size:10px;color:#504e49;font-family:'Liberation Sans', sans-serif;letter-spacing:-0.454px;">Tasks</span>
<div class="btn" style="left:65px;top:122.700px;width:53.200px;height:15.500px"></div>
<div class="btn" style="left:124.900px;top:122.700px;width:53.200px;height:15.500px"></div>
<span class="t" id="help" style="left:81.6px;top:121.10px;height:20px;line-height:20px;font-size:10px;color:#504e49;font-family:'Liberation Sans', sans-serif;letter-spacing:-0.041px;">Help</span>
<span class="t" id="close" style="left:139.8px;top:121.10px;height:20px;line-height:20px;font-size:10px;color:#504e49;font-family:'Liberation Sans', sans-serif;letter-spacing:-0.395px;"><u>C</u>lose</span>
<div class="hdr" style="top:150.6px"></div>
<svg style="left:11px;top:151px" width="14" height="17" viewBox="0 0 14 17">
<defs><linearGradient id="dgh1" x1="0" y1="0" x2="1" y2="1"><stop offset="0" stop-color="#f4f4f4"/><stop offset="1" stop-color="#dadada"/></linearGradient></defs>
<path d="M1.400 2.500h10.600v12.700h-10.600z" fill="url(#dgh1)"/><path d="M1.400 15.300h10.600" stroke="#b98a78" stroke-width=".7"/>
<circle cx="10.500" cy="4.900" r="2.900" fill="#fbe84a" opacity=".75"/><circle cx="10.500" cy="4.900" r="1.900" fill="#fdf06a"/><circle cx="10.500" cy="4.900" r=".8" fill="#fffbd0"/></svg>
<span class="t" id="h1" style="left:27.7px;top:149.80px;height:20px;line-height:20px;font-size:10px;color:#ffffff;font-family:'Liberation Sans', sans-serif;letter-spacing:-0.369px;font-weight:bold;">Solver messages</span>
<svg style="left:222px;top:154px" width="11" height="11" viewBox="0 0 11 11">
<circle cx="5.5" cy="5.4" r="4.6" fill="#fbf3ee"/>
<path d="M3.2 5.2l2.3-2.2 2.3 2.2M3.2 8l2.3-2.2 2.3 2.2" fill="none" stroke="#e8663a" stroke-width="1.2"/></svg>
<div class="body" style="top:167px;height:41px"></div>
<span class="t" id="s1" style="left:16.5px;top:170.60px;height:20px;line-height:20px;font-size:8.5px;color:#45433f;font-family:'Liberation Serif', serif;letter-spacing:0.035px;">Under-constrained sketch with 5 degrees of freedom</span>
<span class="t" id="s2" style="left:16.5px;top:184.90px;height:20px;line-height:20px;font-size:8.5px;color:#45433f;font-family:'Liberation Serif', serif;letter-spacing:-0.047px;">Solved in 0 sec</span>
<div class="hdr" style="top:212.6px"></div>
<svg style="left:11px;top:213px" width="14" height="17" viewBox="0 0 14 17">
<defs><linearGradient id="dgh2" x1="0" y1="0" x2="1" y2="1"><stop offset="0" stop-color="#f4f4f4"/><stop offset="1" stop-color="#dadada"/></linearGradient></defs>
<path d="M1.400 2.500h10.600v12.700h-10.600z" fill="url(#dgh2)"/><path d="M1.400 15.300h10.600" stroke="#b98a78" stroke-width=".7"/>
<circle cx="10.500" cy="4.900" r="2.900" fill="#fbe84a" opacity=".75"/><circle cx="10.500" cy="4.900" r="1.900" fill="#fdf06a"/><circle cx="10.500" cy="4.900" r=".8" fill="#fffbd0"/></svg>
<span class="t" id="h2" style="left:27.7px;top:211.80px;height:20px;line-height:20px;font-size:10px;color:#ffffff;font-family:'Liberation Sans', sans-serif;letter-spacing:-0.163px;font-weight:bold;">Edit controls</span>
<svg style="left:222px;top:216px" width="11" height="11" viewBox="0 0 11 11">
<circle cx="5.5" cy="5.4" r="4.6" fill="#fbf3ee"/>
<path d="M3.2 5.2l2.3-2.2 2.3 2.2M3.2 8l2.3-2.2 2.3 2.2" fill="none" stroke="#e8663a" stroke-width="1.2"/></svg>
<div class="body" style="top:229px;height:71px"></div>
<span class="t" id="gs" style="left:16.8px;top:237.80px;height:20px;line-height:20px;font-size:10px;color:#504e49;font-family:'Liberation Sans', sans-serif;letter-spacing:-0.263px;">Grid size:</span>
<div class="btn" style="left:124px;top:239px;width:101px;height:17px"></div>
<span class="t" id="c1" style="left:127.9px;top:238.10px;height:20px;line-height:20px;font-size:10px;color:#504e49;font-family:'Liberation Sans', sans-serif;letter-spacing:-0.316px;">10 mm</span>
<svg style="left:216px;top:242px" width="7" height="11" viewBox="0 0 7 11"><path d="M1.500 4.300l2-2.400 2 2.400zM1.500 7l2 2.400 2-2.400z" fill="#76746f"/></svg>
<div class="cb" style="left:18px;top:262px"></div>
<span class="t" id="gsn" style="left:33.2px;top:257.60px;height:20px;line-height:20px;font-size:10px;color:#504e49;font-family:'Liberation Sans', sans-serif;letter-spacing:-0.306px;">Grid snap</span>
<div class="cb" style="left:18px;top:280.5px;background:linear-gradient(#f08a5d,#e86b3c);border-color:#b5502a"></div>
<svg style="left:18px;top:280.5px" width="10" height="10" viewBox="0 0 10 10"><path d="M2.2 5l2 2.3 3.6-4.8" fill="none" stroke="#5a2410" stroke-width="1.4"/></svg>
<span class="t" id="ac" style="left:33.2px;top:276.10px;height:20px;line-height:20px;font-size:10px;color:#504e49;font-family:'Liberation Sans', sans-serif;letter-spacing:0.018px;">Auto constraints</span>
<div class="hdr" style="top:306.6px"></div>
<svg style="left:11px;top:307px" width="14" height="17" viewBox="0 0 14 17">
<defs><linearGradient id="dgh3" x1="0" y1="0" x2="1" y2="1"><stop offset="0" stop-color="#f4f4f4"/><stop offset="1" stop-color="#dadada"/></linearGradient></defs>
<path d="M1.400 2.500h10.600v12.700h-10.600z" fill="url(#dgh3)"/><path d="M1.400 15.300h10.600" stroke="#b98a78" stroke-width=".7"/>
<circle cx="10.500" cy="4.900" r="2.900" fill="#fbe84a" opacity=".75"/><circle cx="10.500" cy="4.900" r="1.900" fill="#fdf06a"/><circle cx="10.500" cy="4.900" r=".8" fill="#fffbd0"/></svg>
<span class="t" id="h3" style="left:27.7px;top:305.80px;height:20px;line-height:20px;font-size:10px;color:#ffffff;font-family:'Liberation Sans', sans-serif;letter-spacing:-0.233px;font-weight:bold;">Constraints</span>
<svg style="left:222px;top:310px" width="11" height="11" viewBox="0 0 11 11">
<circle cx="5.5" cy="5.4" r="4.6" fill="#fbf3ee"/>
<path d="M3.2 5.2l2.3-2.2 2.3 2.2M3.2 8l2.3-2.2 2.3 2.2" fill="none" stroke="#e8663a" stroke-width="1.2"/></svg>
<div class="body" style="top:323px;height:132px"></div>
<span class="t" id="fl" style="left:16.8px;top:331.50px;height:20px;line-height:20px;font-size:10px;color:#504e49;font-family:'Liberation Sans', sans-serif;letter-spacing:0.027px;">Filter:</span>
<div class="btn" style="left:124px;top:332px;width:101px;height:17px"></div>
<span class="t" id="c2" style="left:127.9px;top:331.10px;height:20px;line-height:20px;font-size:10px;color:#504e49;font-family:'Liberation Sans', sans-serif;letter-spacing:0.010px;">Normal</span>
<svg style="left:216px;top:335px" width="7" height="11" viewBox="0 0 7 11"><path d="M1.500 4.300l2-2.400 2 2.400zM1.500 7l2 2.400 2-2.400z" fill="#76746f"/></svg>
<div style="left:16px;top:353px;width:200px;height:102px;background:#fff;border:1px solid #b9b5af;border-bottom:none"></div>
<span class="t" id="r0" style="left:38.9px;top:353.80px;height:20px;line-height:20px;font-size:10px;color:#504e49;font-family:'Liberation Sans', sans-serif;letter-spacing:-0.039px;">Constraint2</span>
<div style="left:20.2px;top:361.4px;width:14.2px;height:3.4px;background:#e2200e;border-radius:1.2px"></div>
<span class="t" id="r1" style="left:38.9px;top:370.85px;height:20px;line-height:20px;font-size:10px;color:#504e49;font-family:'Liberation Sans', sans-serif;letter-spacing:-0.039px;">Constraint4</span>
<div style="left:20.2px;top:378.4px;width:14.2px;height:3.4px;background:#e2200e;border-radius:1.2px"></div>
<span class="t" id="r2" style="left:38.9px;top:387.90px;height:20px;line-height:20px;font-size:10px;color:#504e49;font-family:'Liberation Sans', sans-serif;letter-spacing:-0.039px;">Constraint5</span>
<div style="left:20.2px;top:399.3px;width:14.1px;height:4.1px;background:#e2200e;border-radius:1.2px"></div>
<div style="left:25.5px;top:390.7px;width:3.3px;height:10px;background:#e2200e"></div>
<span class="t" id="r3" style="left:38.9px;top:404.95px;height:20px;line-height:20px;font-size:10px;color:#504e49;font-family:'Liberation Sans', sans-serif;letter-spacing:-0.039px;">Constraint6</span>
<div style="left:20.2px;top:416.4px;width:14.1px;height:4.1px;background:#e2200e;border-radius:1.2px"></div>
<div style="left:25.5px;top:407.8px;width:3.3px;height:10px;background:#e2200e"></div>
<span class="t" id="r4" style="left:38.9px;top:422.00px;height:20px;line-height:20px;font-size:10px;color:#504e49;font-family:'Liberation Sans', sans-serif;letter-spacing:-0.039px;">Constraint8</span>
<div style="left:25.5px;top:424.3px;width:3.3px;height:13.3px;background:#e2200e;border-radius:1.2px"></div>
<span class="t" id="r5" style="left:38.9px;top:439.05px;height:20px;line-height:20px;font-size:10px;color:#504e49;font-family:'Liberation Sans', sans-serif;letter-spacing:-0.039px;">Constraint9</span>
<div style="left:25.5px;top:441.3px;width:3.3px;height:13.3px;background:#e2200e;border-radius:1.2px"></div>
<div style="left:218px;top:353px;width:8px;height:102px;background:#dad7d3;border:1px solid #c1bdb7;border-radius:4px 4px 0 0;border-bottom:none"></div>
<div style="left:218px;top:361.5px;width:8px;height:50.5px;background:linear-gradient(90deg,#ffffff,#ecebe9);border:1px solid #b4b0a9;border-radius:4px"></div>
<svg style="left:218px;top:353px" width="8" height="9" viewBox="0 0 8 9"><path d="M2.6 5.8l1.4-1.8 1.4 1.8z" fill="#6a6761"/></svg>
<svg style="left:218px;top:380px" width="8" height="9" viewBox="0 0 8 9"><path d="M2.5 2.5h3M2.5 4.5h3M2.5 6.5h3" stroke="#aaa6a0" stroke-width=".8"/></svg>
<div style="left:0;top:454.500px;width:257px;height:3.500px;background:linear-gradient(#dcd9d5 0,#dcd9d5 26%,#a5716f 30%,#8c5452)"></div>
<div style="left:241px;top:109px;width:12px;height:346px;background:#f1f0ee;border-top:1px solid #d2cfca;border-right:1px solid #d2cfca;border-radius:0 4px 0 0"></div>
<div style="left:242px;top:110px;width:10px;height:345px;background:#f3f2f0;border:1px solid #d0cdc8;border-radius:5px 5px 3px 3px"></div>
<div style="left:242.5px;top:411px;width:9px;height:43px;background:#d2cfcb;border-radius:0 0 3px 3px"></div>
<div style="left:243.3px;top:118.5px;width:7.4px;height:293px;background:linear-gradient(90deg,#ffffff,#efeeec);border:1px solid #b4b0a9;border-radius:4px"></div>
<svg style="left:242px;top:110px" width="10" height="9" viewBox="0 0 10 9"><path d="M3.4 5.6l1.6-2 1.6 2z" fill="#6a6761"/></svg>
<svg style="left:242px;top:444px" width="10" height="9" viewBox="0 0 10 9"><path d="M3 3.4l2 2.4 2-2.4z" fill="#4a4843"/></svg>
<svg style="left:243px;top:260px" width="8" height="9" viewBox="0 0 8 9"><path d="M2.3 2.5h3.4M2.3 4.5h3.4M2.3 6.5h3.4" stroke="#b5b1ab" stroke-width=".8"/></svg>
<div style="left:253px;top:73px;width:4px;height:382px;background:#efeeec"></div>
<svg style="left:253px;top:260px" width="4" height="9" viewBox="0 0 4 9"><path d="M.5 2.5h3M.5 4.5h3M.5 6.5h3" stroke="#c5c1bb" stroke-width=".8"/></svg>
<svg style="left:257px;top:73px" width="540" height="361" viewBox="257 73 540 361">
<defs><linearGradient id="bg" x1="0" y1="0" x2="0" y2="1"><stop offset="0" stop-color="#333366"/><stop offset="1" stop-color="#9797aa"/></linearGradient></defs>
<rect x="257" y="73" width="540" height="361" fill="url(#bg)"/>
<path d="M292.6 99.5V360.5M330.1 99.5V360.5M367.6 99.5V360.5M405.0 99.5V360.5M442.4 99.5V360.5M479.9 99.5V360.5M517.4 99.5V360.5M555.0 99.5V360.5M592.6 99.5V360.5M630.1 99.5V360.5M667.6 99.5V360.5M705.2 99.5V360.5M742.8 99.5V360.5M780.4 99.5V360.5M257 134.5H795M257 172.0H795M257 209.5H795M257 247.0H795M257 284.5H795M257 359.8H795" stroke="#d4d4dc" stroke-opacity=".52" stroke-width="1.1" stroke-dasharray="3.2 2.2" fill="none"/>
<path d="M257 322.3H797" stroke="#e0452f" stroke-width="1.1"/>
<path d="M517.8 118V398" stroke="#58c468" stroke-width="1.9"/>
<g fill="none" stroke="#ffffff" stroke-width="1.95" stroke-linejoin="round">
<path d="M384.4 274.8A131.6 131.6 0 0 1 647.6 274.8"/>
<path d="M420.0 274.8A96.0 96.0 0 0 1 612.0 274.8"/>
<path d="M384.4 274.8H285.3V309.6H420.0V274.8"/>
<path d="M647.6 274.8H746.5V309.6H612.0V274.8"/>
</g>
<path d="M384.4 274.8H420.0" stroke="#0a14d8" stroke-width="2.3"/>
<circle cx="285.1" cy="274.6" r="2.3" fill="#ff2a00"/>
<circle cx="285.1" cy="309.7" r="2.3" fill="#ff2a00"/>
<circle cx="384.4" cy="274.7" r="2.3" fill="#ff2a00"/>
<circle cx="420" cy="274.7" r="2.3" fill="#ff2a00"/>
<circle cx="420" cy="309.7" r="2.3" fill="#ff2a00"/>
<circle cx="611.9" cy="274.6" r="2.3" fill="#ff2a00"/>
<circle cx="647" cy="274.6" r="2.3" fill="#ff2a00"/>
<circle cx="611.9" cy="309.6" r="2.3" fill="#ff2a00"/>
<circle cx="746.3" cy="274.6" r="2.3" fill="#ff2a00"/>
<circle cx="746.3" cy="309.6" r="2.3" fill="#ff2a00"/>
<circle cx="516" cy="274.7" r="2.3" fill="#ff2a00"/>
<circle cx="517.5" cy="322.4" r="2.4" fill="#ff2a00"/>
<path d="M517.700 223.300l2.400 12.800h-4.800z" fill="#20208a"/>
<path d="M616.500 322.400l-12.700-2.300v4.600z" fill="#7a2222"/>
<rect x="274.3" y="288.1" width="1.9" height="9.2" fill="#ff2a00"/>
<rect x="736.2" y="288.2" width="1.9" height="9.2" fill="#ff2a00"/>
<rect x="511.9" y="130.0" width="2.4" height="8" fill="#ff2a00"/>
<rect x="508.5" y="137.5" width="8.6" height="2.1" fill="#ff2a00"/>
<text x="518.6" y="140.3" font-family="Liberation Sans, sans-serif" font-size="6.8" fill="#f02808">6</text>
<rect x="331.1" y="279.8" width="2.0" height="7.5" fill="#ff2a00"/>
<rect x="327.9" y="286.4" width="6.6" height="2.0" fill="#ff2a00"/>
<rect x="332.0" y="283.2" width="7.6" height="1.3" fill="#ff2a00"/>
<text x="336.3" y="289.6" font-family="Liberation Sans, sans-serif" font-size="6.8" fill="#f02808">5</text>
<rect x="693.1" y="261.9" width="2.0" height="7.5" fill="#ff2a00"/>
<rect x="689.4" y="268.9" width="7.2" height="2.0" fill="#ff2a00"/>
<rect x="694.0" y="264.7" width="8" height="1.3" fill="#ff2a00"/>
<text x="698.8" y="271.6" font-family="Liberation Sans, sans-serif" font-size="6.8" fill="#f02808">6</text>
<rect x="390.0" y="262.4" width="7" height="2.0" fill="#ff2a00"/>
<rect x="390.0" y="267.3" width="7" height="2.0" fill="#ff2a00"/>
<text x="398.8" y="271.7" font-family="Liberation Sans, sans-serif" font-size="7.3" fill="#f02808">28</text>
<rect x="340.0" y="315.1" width="6.9" height="2.1" fill="#ff2a00"/>
<rect x="340.0" y="319.5" width="6.9" height="2.1" fill="#ff2a00"/>
<rect x="348.0" y="318.0" width="8.6" height="1.2" fill="#ff2a00"/>
<text x="348.3" y="324.5" font-family="Liberation Sans, sans-serif" font-size="7" fill="#f02808">25</text>
<rect x="667.1" y="297.6" width="6.6" height="2.1" fill="#ff2a00"/>
<rect x="667.1" y="302.2" width="6.6" height="2.1" fill="#ff2a00"/>
<rect x="675.0" y="300.2" width="8.6" height="1.2" fill="#ff2a00"/>
<text x="675.3" y="306.7" font-family="Liberation Sans, sans-serif" font-size="7" fill="#f02808">25</text>
<rect x="416.7" y="289.0" width="8.1" height="2.0" fill="#ff2a00"/>
<rect x="416.7" y="293.6" width="8.1" height="2.0" fill="#ff2a00"/>
<rect x="426.8" y="288.4" width="1.8" height="6.8" fill="#ff2a00"/>
<text x="425.6" y="298.4" font-family="Liberation Sans, sans-serif" font-size="6.5" fill="#f02808">28</text>
<text x="429.6" y="298.4" font-family="Liberation Sans, sans-serif" font-size="6.5" fill="#f02808">84</text>
<rect x="612.0" y="289.0" width="6.4" height="2.0" fill="#ff2a00"/>
<rect x="612.0" y="293.6" width="6.4" height="2.0" fill="#ff2a00"/>
<rect x="620.3" y="288.4" width="1.8" height="7.4" fill="#ff2a00"/>
<text x="620.6" y="298.4" font-family="Liberation Sans, sans-serif" font-size="6.5" fill="#f02808">84</text>
<path d="M421 274.3c2-.3 3.600-1.600 4.500-3.300M425.500 271l3.200 7.800M425.500 271c2.300.8 4.200 3 5.200 5.900" fill="none" stroke="#ff2a00" stroke-width="1.900"/>
<path d="M613 274.300c2-.3 4.300-1.200 5.600-2.700M618.600 271.600l1.900 7.400M618.600 271.600c1.900.6 3.400 2.200 4.400 4.400" fill="none" stroke="#ff2a00" stroke-width="1.900"/>
<path d="M778.900 416.500V404.500" stroke="#1c1ca0" stroke-width="1.400"/><path d="M778.900 403.200l1.300 3.500h-2.600z" fill="#1c1ca0"/>
<path d="M778.900 416.400H790" stroke="#b01818" stroke-width="1.300"/><path d="M791.300 416.400l-3.500-1.300v2.600z" fill="#b01818"/>
<text x="780.8" y="405.6" font-family="Liberation Sans, sans-serif" font-size="6.8" fill="#111">Z</text>
<text x="780.5" y="416.2" font-family="Liberation Sans, sans-serif" font-size="6.8" fill="#111">Y</text>
<text x="792.3" y="417.3" font-family="Liberation Sans, sans-serif" font-size="6.8" fill="#111">X</text>
</svg>
<div style="left:257px;top:434px;width:540px;height:21px;background:#f2f1f0"></div>
<div style="left:257px;top:436px;width:73px;height:19px;background:linear-gradient(#e9e7e4,#dddad6);border:1px solid #c6c2bc;border-top:none;border-radius:0 0 3px 3px"></div>
<div style="left:329.5px;top:434px;width:102px;height:21px;background:#f6f5f4;border:1px solid #c6c2bc;border-top:none;border-radius:0 0 3px 3px"></div>
<span class="t" id="sp" style="left:262px;top:435.10px;height:20px;line-height:20px;font-size:10px;color:#504e49;font-family:'Liberation Sans', sans-serif;letter-spacing:-0.114px;">Start page</span>
<span class="t" id="un" style="left:350px;top:435.10px;height:20px;line-height:20px;font-size:10px;color:#504e49;font-family:'Liberation Sans', sans-serif;letter-spacing:-0.263px;">Unnamed : 1*</span>
<svg style="left:312.5px;top:439.5px" width="10" height="10" viewBox="0 0 10 10"><path d="M2.300 2.300l5.400 5.400M7.700 2.300l-5.400 5.400" stroke="#65635e" stroke-width="2.300"/></svg>
<svg style="left:415px;top:439.5px" width="10" height="10" viewBox="0 0 10 10"><path d="M2.300 2.300l5.400 5.400M7.700 2.300l-5.400 5.400" stroke="#65635e" stroke-width="2.300"/></svg>
<svg style="left:334px;top:439px" width="11" height="11" viewBox="0 0 11 11">
<path d="M1.2 1h2v9h-2z M3 1h3.2v2H3z M3 4.6h2.4v1.8H3z" fill="#d3311c"/>
<circle cx="7" cy="6.4" r="2.7" fill="#1c3fb0"/><circle cx="7" cy="6.4" r="1" fill="#e9ecf7"/>
<path d="M7 2.9v7M3.5 6.4h7M4.5 3.9l5 5M9.5 3.9l-5 5" stroke="#1c3fb0" stroke-width="1"/><circle cx="7" cy="6.4" r="1" fill="#e9ecf7"/></svg>
<div style="left:0;top:454.500px;width:797px;height:3.500px;background:linear-gradient(#dcd9d5 0,#dcd9d5 26%,#a5716f 30%,#8c5452)"></div>
</body></html>
